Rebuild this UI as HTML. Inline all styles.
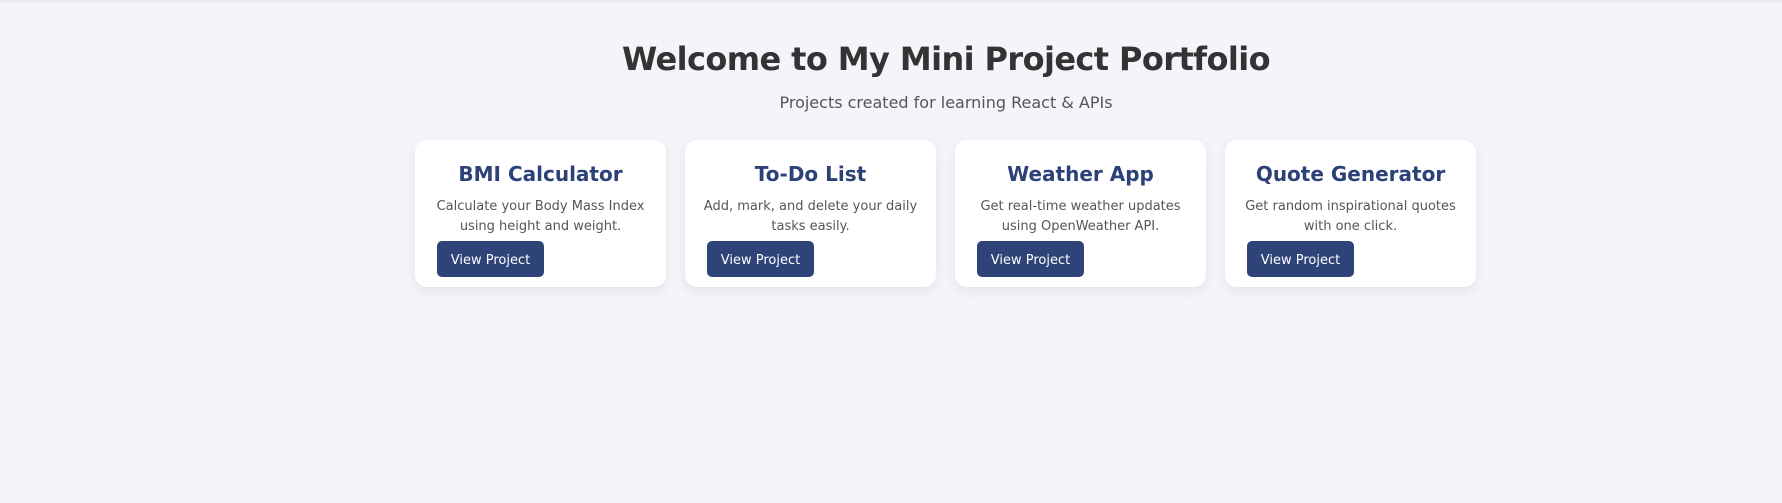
<!DOCTYPE html>
<html><head><meta charset="utf-8"><style>
html,body{margin:0;padding:0;}
body{width:1782px;height:503px;background:#f4f5fa;font-family:"DejaVu Sans","Liberation Sans",sans-serif;overflow:hidden;position:relative;}
.topline{position:absolute;left:0;top:0;width:1782px;height:3px;background:linear-gradient(#e8e9ee,#f4f5fa);}
h1{position:absolute;left:0;width:1892px;top:37px;margin:0;text-align:center;font-size:32px;font-weight:bold;color:#333;line-height:44px;letter-spacing:-0.6px;}
.sub{position:absolute;left:0;width:1892px;top:92px;text-align:center;font-size:16px;color:#555;line-height:22px;}
.cards{position:absolute;left:415px;top:140px;display:flex;gap:19px;}
.card{width:251px;height:147px;background:#fff;border-radius:12px;box-shadow:0 4px 12px rgba(0,0,0,0.08);box-sizing:border-box;padding:0 22px;text-align:center;position:relative;}
.card h2{margin:0;position:absolute;left:0;right:0;top:20px;font-size:20px;line-height:28px;color:#2c4177;font-weight:bold;}
.card p{margin:0;position:absolute;left:12px;right:12px;top:57px;font-size:13px;line-height:20px;color:#555;}
.btn{position:absolute;left:22px;top:101px;width:107px;height:36px;background:#2e4378;color:#fff;border-radius:5px;font-size:13px;line-height:39px;text-align:center;}
</style></head><body>
<div class="topline"></div>
<h1>Welcome to My Mini Project Portfolio</h1>
<div class="sub">Projects created for learning React &amp; APIs</div>
<div class="cards">
<div class="card"><h2>BMI Calculator</h2><p>Calculate your Body Mass Index using height and weight.</p><div class="btn">View Project</div></div>
<div class="card"><h2>To-Do List</h2><p>Add, mark, and delete your daily tasks easily.</p><div class="btn">View Project</div></div>
<div class="card"><h2>Weather App</h2><p>Get real-time weather updates using OpenWeather API.</p><div class="btn">View Project</div></div>
<div class="card"><h2>Quote Generator</h2><p>Get random inspirational quotes with one click.</p><div class="btn">View Project</div></div>
</div>
</body></html>
